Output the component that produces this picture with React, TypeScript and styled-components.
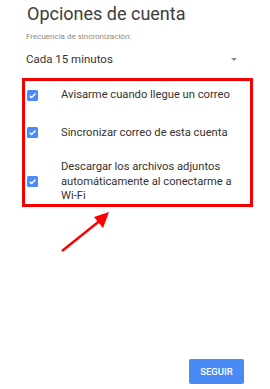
import React from 'react';
import styled, { createGlobalStyle } from 'styled-components';

const GlobalStyle = createGlobalStyle`
  html, body {
    margin: 0;
    padding: 0;
    background: #fff;
  }
  body {
    font-family: Roboto, "Liberation Sans", Arial, sans-serif;
  }
`;

const Page = styled.div`
  width: 270px;
  height: 389px;
  display: flex;
  flex-direction: column;
  box-sizing: border-box;
  overflow: hidden;
`;

const Header = styled.div`
  padding: 3px 26px 0 27px;
`;

const Title = styled.h1`
  margin: 0;
  font-size: 18px;
  font-weight: 400;
  line-height: 22px;
  color: #3c3c3c;
`;

const Label = styled.div`
  margin-top: 7px;
  font-size: 8px;
  line-height: 10px;
  color: #8a8a8a;
  margin-left: -1px;
`;

const Select = styled.div`
  margin-top: 10px;
  display: flex;
  align-items: center;
  justify-content: space-between;
  font-size: 11.5px;
  line-height: 14px;
  color: #333;
  padding-right: 7px;
  margin-left: -1px;
`;

const Caret = styled.span`
  width: 0;
  height: 0;
  border-left: 3.5px solid transparent;
  border-right: 3.5px solid transparent;
  border-top: 3.5px solid #8a8a8a;
`;

const Box = styled.div`
  margin: 12px 0 0 22px;
  width: 231px;
  height: 129px;
  box-sizing: border-box;
  border: 3px solid #f40000;
  display: flex;
  flex-direction: column;
`;

const Row = styled.label<{ $top: number }>`
  display: flex;
  align-items: center;
  margin-top: ${(p) => p.$top}px;
  padding-left: 2px;
`;

const Check = styled.span`
  flex: none;
  width: 11px;
  height: 11px;
  border-radius: 1.5px;
  background: #4c8bf5;
  display: flex;
  align-items: center;
  justify-content: center;
`;

const RowText = styled.span`
  margin-left: 23px;
  font-size: 11.2px;
  line-height: 14.5px;
  color: #333;
`;

const Arrow = styled.svg`
  display: block;
  margin: 2px 0 0 58px;
`;

const Footer = styled.div`
  margin-top: auto;
  display: flex;
  justify-content: flex-end;
  padding: 0 26px 5px 0;
`;

const Button = styled.button`
  width: 55px;
  height: 25px;
  border: none;
  border-radius: 2px;
  background: #4a8af4;
  color: #fff;
  font-family: Roboto, "Liberation Sans", Arial, sans-serif;
  font-size: 9.5px;
  font-weight: 500;
  padding: 0;
`;

const CheckMark = () => (
  <svg width="9" height="9" viewBox="0 0 9 9">
    <path d="M1.6 4.7 L3.6 6.6 L7.5 2.6" fill="none" stroke="#fff" strokeWidth="1.4" />
  </svg>
);

const options = [
  { top: 7, text: 'Avisarme cuando llegue un correo' },
  { top: 23, text: 'Sincronizar correo de esta cuenta' },
  { top: 20, text: 'Descargar los archivos adjuntos automáticamente al conectarme a Wi-Fi' },
];

export default function App() {
  return (
    <>
      <GlobalStyle />
      <Page>
        <Header>
          <Title>Opciones de cuenta</Title>
          <Label>Frecuencia de sincronización:</Label>
          <Select>
            <span>Cada 15 minutos</span>
            <Caret />
          </Select>
        </Header>
        <Box>
          {options.map((o) => (
            <Row key={o.text} $top={o.top}>
              <Check>
                <CheckMark />
              </Check>
              <RowText>{o.text}</RowText>
            </Row>
          ))}
        </Box>
        <Arrow width="60" height="46" viewBox="0 0 60 46">
          <line x1="4" y1="42" x2="44" y2="10" stroke="#f00" strokeWidth="2.5" />
          <polygon points="51,3 36,8 45,19" fill="#f00" />
        </Arrow>
        <Footer>
          <Button>SEGUIR</Button>
        </Footer>
      </Page>
    </>
  );
}
